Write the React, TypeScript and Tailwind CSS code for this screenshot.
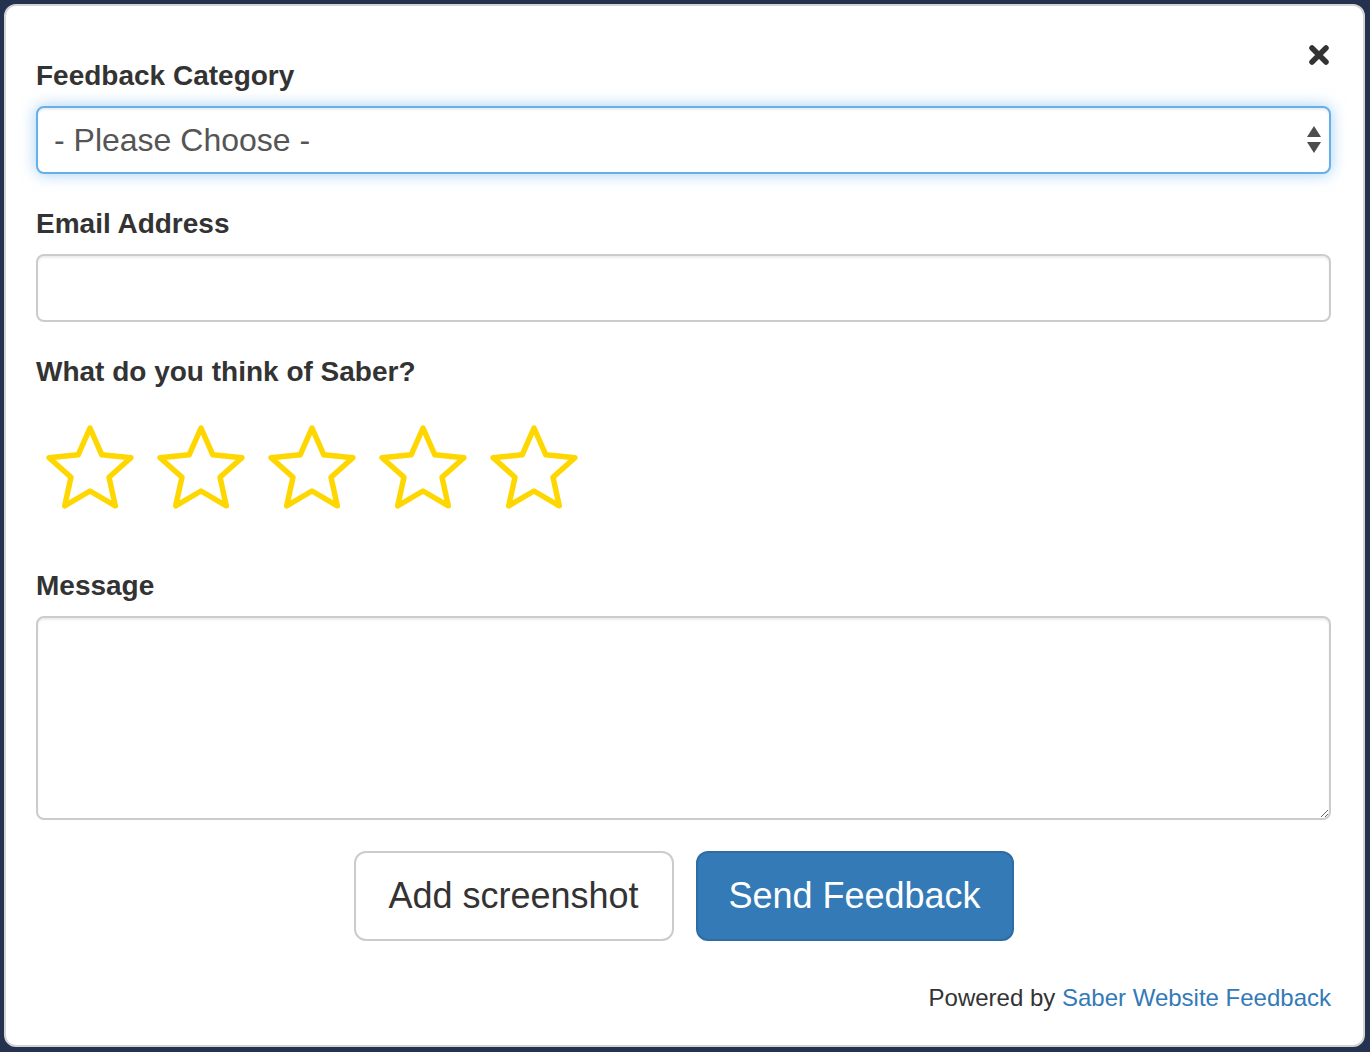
import React from "react";

const stars = [1, 2, 3, 4, 5];

function StarOutline() {
  return (
    <svg width="92" height="88" viewBox="0 0 92 88" fill="none">
      <polygon
        points="46,4 57.8,30.8 86.9,33.7 65,53.2 71.3,81.8 46,67 20.7,81.8 27,53.2 5.1,33.7 34.2,30.8"
        stroke="#ffd700"
        strokeWidth="5.5"
        strokeLinejoin="round"
      />
    </svg>
  );
}

function CloseIcon() {
  return (
    <svg width="22" height="22" viewBox="0 0 22 22">
      <path d="M4 4 L18 18 M18 4 L4 18" stroke="#333" strokeWidth="5.5" strokeLinecap="round" />
    </svg>
  );
}

export default function App() {
  return (
    <div className="w-[1370px] h-[1052px] bg-[#24324f] p-[4px] font-['Liberation_Sans',Arial,sans-serif] text-[#333]">
      <div className="relative w-[1361px] h-[1043px] bg-white border-2 border-[#d4d4d4] rounded-[12px] pt-[50px] pl-[30px] pr-[32px]">
        <button className="absolute top-[38px] right-[33px] bg-transparent border-0 p-0">
          <CloseIcon />
        </button>

        <form onSubmit={(e) => e.preventDefault()}>
          <div className="mb-[30px]">
            <label className="block text-[28px] leading-[40px] font-bold mb-[10px]">Feedback Category</label>
            <div className="relative">
              <select className="appearance-none w-full h-[68px] rounded-[8px] border-2 border-[#66afe9] bg-white pl-[16px] text-[32px] text-[#555] font-['Liberation_Sans',Arial,sans-serif] outline-none shadow-[inset_0_2px_2px_rgba(0,0,0,0.075),0_0_16px_rgba(102,175,233,0.6)]">
                <option>- Please Choose -</option>
              </select>
              <svg className="absolute right-[9px] top-[19px] pointer-events-none" width="16" height="30" viewBox="0 0 16 30">
                <path d="M8 1 L15 12 L1 12 Z" fill="#4d4d4d" />
                <path d="M1 17 L15 17 L8 28 Z" fill="#4d4d4d" />
              </svg>
            </div>
          </div>

          <div className="mb-[30px]">
            <label className="block text-[28px] leading-[40px] font-bold mb-[10px]">Email Address</label>
            <input
              type="email"
              className="w-full h-[68px] rounded-[8px] border-2 border-[#ccc] px-[24px] text-[28px] outline-none shadow-[inset_0_2px_2px_rgba(0,0,0,0.075)]"
            />
          </div>

          <div className="mb-[30px]">
            <label className="block text-[28px] leading-[40px] font-bold mb-[10px]">What do you think of Saber?</label>
            <div className="flex gap-[19px] ml-[8px] pt-[22px] pb-[24px]">
              {stars.map((s) => (
                <StarOutline key={s} />
              ))}
            </div>
          </div>

          <div>
            <label className="block text-[28px] leading-[40px] font-bold mb-[10px]">Message</label>
            <textarea className="block w-full h-[204px] rounded-[8px] border-2 border-[#ccc] px-[24px] py-[12px] text-[28px] outline-none shadow-[inset_0_2px_2px_rgba(0,0,0,0.075)]" />
          </div>

          <div className="flex justify-center gap-[22px] mt-[31px]">
            <button className="w-[320px] h-[90px] rounded-[12px] border-2 border-[#ccc] bg-white text-[36px] text-[#333]">
              Add screenshot
            </button>
            <button className="w-[318px] h-[90px] rounded-[12px] border-2 border-[#2e6da4] bg-[#337ab7] text-[36px] text-white">
              Send Feedback
            </button>
          </div>

          <p className="mt-[40px] text-right text-[24px] leading-[34px] text-[#333]">
            Powered by <a className="text-[#337ab7]">Saber Website Feedback</a>
          </p>
        </form>
      </div>
    </div>
  );
}
